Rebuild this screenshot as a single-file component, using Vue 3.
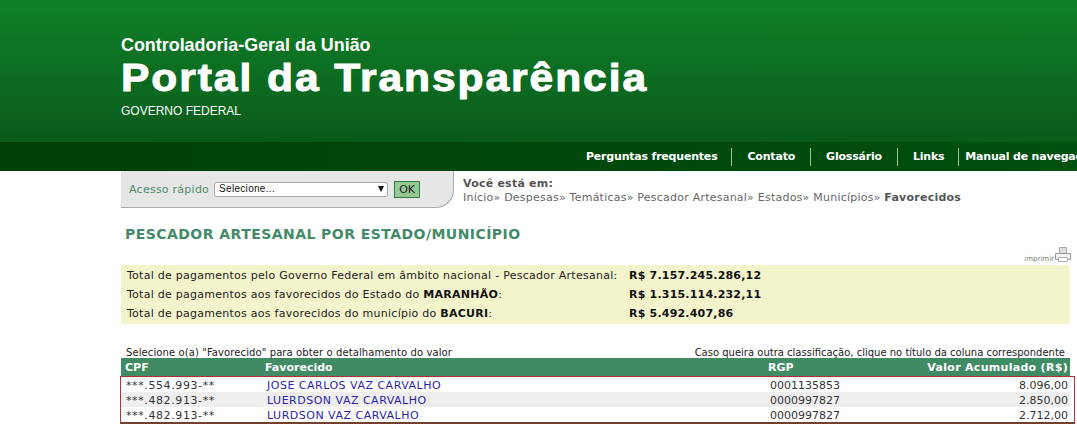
<template>
  <div class="page">
    <header class="top">
      <div class="org">Controladoria-Geral da União</div>
      <h1>Portal da Transparência</h1>
      <div class="gov">GOVERNO FEDERAL</div>
    </header>
    <nav class="nav">
      <a v-for="(item, idx) in menu" :key="item.label" :class="['nav-item', { first: idx === 0 }]" :style="{ paddingLeft: item.left + 'px', paddingRight: item.right + 'px' }">{{ item.label }}</a>
    </nav>
    <div class="content">
      <div class="bar">
        <div class="quick">
          <span class="quick-label">Acesso rápido</span>
          <div class="fake-select">Selecione...<span class="arrow"></span></div>
          <span class="ok">OK</span>
        </div>
        <div class="crumbs">
          <strong>Você está em:</strong>
          <div>Início» Despesas» Temáticas» Pescador Artesanal» Estados» Municípios» <b>Favorecidos</b></div>
        </div>
      </div>
      <h2>PESCADOR ARTESANAL POR ESTADO/MUNICÍPIO</h2>
      <div class="print">
        <span>imprimir</span>
        <svg width="16" height="17" viewBox="0 0 16 17">
          <path d="M4.500 1.500h7v6h-7z" fill="#dcdcdc" stroke="#a8a8a8" />
          <path d="M.5 7.500h15v6H.5z" fill="#f4f4f4" stroke="#9a9a9a" />
          <path d="M3.500 11.500h9v4h-9z" fill="#fff" stroke="#b0b0b0" />
        </svg>
      </div>
      <div class="totals">
        <div v-for="t in totals" :key="t.value" class="total-row">
          <span class="total-label">{{ t.text }}<b v-if="t.place">{{ t.place }}</b><template v-if="t.place">:</template></span>
          <b class="total-value">{{ t.value }}</b>
        </div>
      </div>
      <div class="hints">
        <span class="hint-left">Selecione o(a) "Favorecido" para obter o detalhamento do valor</span>
        <span>Caso queira outra classificação, clique no título da coluna correspondente</span>
      </div>
      <div class="thead row">
        <span class="c-cpf">CPF</span>
        <span class="c-name">Favorecido</span>
        <span class="c-rgp">RGP</span>
        <span class="c-val">Valor Acumulado (R$)</span>
      </div>
      <div class="tbody">
        <div v-for="r in rows" :key="r.name" class="row item">
          <span class="c-cpf">{{ r.cpf }}</span>
          <a class="c-name">{{ r.name }}</a>
          <span class="c-rgp">{{ r.rgp }}</span>
          <span class="c-val">{{ r.val }}</span>
        </div>
        <div class="mark"></div>
      </div>
    </div>
  </div>
</template>

<script setup>
const menu = [
  { label: 'Perguntas frequentes', left: 0, right: 14 },
  { label: 'Contato', left: 15, right: 15 },
  { label: 'Glossário', left: 15, right: 15 },
  { label: 'Links', left: 15, right: 14 },
  { label: 'Manual de navegação', left: 6, right: 0 }
]
const totals = [
  { text: 'Total de pagamentos pelo Governo Federal em âmbito nacional - Pescador Artesanal:', value: 'R$ 7.157.245.286,12' },
  { text: 'Total de pagamentos aos favorecidos do Estado do ', place: 'MARANHÃO', value: 'R$ 1.315.114.232,11' },
  { text: 'Total de pagamentos aos favorecidos do município do ', place: 'BACURI', value: 'R$ 5.492.407,86' }
]
const rows = [
  { cpf: '***.554.993-**', name: 'JOSE CARLOS VAZ CARVALHO', rgp: '0001135853', val: '8.096,00' },
  { cpf: '***.482.913-**', name: 'LUERDSON VAZ CARVALHO', rgp: '0000997827', val: '2.850,00' },
  { cpf: '***.482.913-**', name: 'LURDSON VAZ CARVALHO', rgp: '0000997827', val: '2.712,00' }
]
</script>

<style>
html, body { margin: 0; overflow: hidden; background: #fff; }
</style>

<style scoped>
.page {
  width: 1077px;
  height: 429px;
  overflow: hidden;
  font-family: "DejaVu Sans", Verdana, sans-serif;
  font-size: 11px;
  color: #333;
}
.top {
  height: 142px;
  box-sizing: border-box;
  padding: 36px 0 0 121px;
  background: linear-gradient(#0f8129, #0a5a1a);
  color: #fff;
  font-family: "Liberation Sans", Arial, sans-serif;
}
.org { font-size: 17.900px; font-weight: bold; line-height: 18px; }
h1 {
  margin: 3px 0 0;
  font-size: 39px;
  line-height: 42px;
  font-weight: bold;
  letter-spacing: 1.8px;
  white-space: nowrap;
  -webkit-text-stroke: 1px #fff;
  transform: scaleX(1.09);
  transform-origin: left center;
}
.gov { font-size: 12px; line-height: 14px; margin-top: 5px; }
.nav {
  height: 29px;
  display: flex;
  align-items: center;
  padding-left: 586px;
  background: linear-gradient(90deg, #003f08, #00500f);
  white-space: nowrap;
}
.nav-item {
  flex: none;
  height: 18px;
  line-height: 18px;
  color: #fff;
  font-weight: bold;
  font-size: 11px;
  letter-spacing: -.2px;
  border-left: 1px solid #9fbf9f;
}
.nav-item.first { border-left: none; }
.content { padding-left: 121px; width: 949px; }
.bar { display: flex; height: 37px; }
.quick {
  width: 333px;
  height: 37px;
  flex: none;
  box-sizing: border-box;
  display: flex;
  align-items: center;
  padding: 0 0 0 8px;
  background: #e6e6e6;
  border-bottom: 1px solid #aaa;
  border-right: 1px solid #aaa;
  border-bottom-right-radius: 18px;
}
.quick-label { color: #4c8a68; letter-spacing: .25px; }
.fake-select {
  position: relative;
  width: 174px;
  height: 15px;
  box-sizing: border-box;
  margin-left: 5px;
  padding-left: 4px;
  background: #fff;
  border: 1px solid #aaa;
  border-radius: 2px;
  font: 10px/12px "Liberation Sans", Arial, sans-serif;
  color: #111;
  letter-spacing: .3px;
}
.arrow {
  position: absolute;
  right: 3px;
  top: 3px;
  border: 3.500px solid transparent;
  border-top: 6px solid #111;
  border-bottom: none;
}
.ok {
  margin-left: 6px;
  width: 24px;
  height: 15px;
  line-height: 15px;
  text-align: center;
  background: #96c896;
  border: 1px solid #2f7d3f;
  color: #222;
}
.crumbs { margin: 6px 0 0 9px; line-height: 14px; color: #666; letter-spacing: .23px; white-space: nowrap; }
.crumbs strong, .crumbs b { color: #555; }
h2 {
  margin: 17px 0 0 4px;
  font-size: 14px;
  line-height: 18px;
  color: #438a68;
  font-weight: bold;
  letter-spacing: .45px;
}
.print {
  height: 20px;
  display: flex;
  justify-content: flex-end;
  align-items: flex-end;
  gap: 1px;
  font-size: 7px;
  color: #777;
  margin: 0 -1px 2px 0;
}
.totals { background: #f4f4cc; padding: 1px 0; }
.total-row { display: flex; height: 19px; line-height: 19px; padding-left: 6px; color: #222; letter-spacing: .26px; }
.total-label { width: 502px; flex: none; }
.total-row b { color: #111; }
.total-value { letter-spacing: .2px; }
.hints {
  display: flex;
  justify-content: space-between;
  margin-top: 23px;
  padding: 0 5px;
  font-size: 10px;
  line-height: 11px;
  color: #222;
}
.hint-left { letter-spacing: .1px; }
.row { display: flex; white-space: nowrap; }
.thead {
  height: 18px;
  line-height: 20px;
  background: #408b63;
  color: #fff;
  font-weight: bold;
}
.thead .c-cpf { width: 144px; }
.thead .c-val { letter-spacing: .3px; }
.tbody { position: relative; margin-top: 1px; }
.mark {
  position: absolute;
  left: -1px;
  top: -1px;
  right: -5px;
  bottom: -2px;
  border: 1px solid #b03434;
  border-bottom: 2px solid #74402e;
  pointer-events: none;
}
.item { height: 15px; line-height: 17px; color: #333; }
.item:nth-child(even) { background: #eeeeee; }
.item .c-cpf { letter-spacing: .6px; padding-left: 5px; }
.item .c-name { letter-spacing: .5px; }
.c-cpf { width: 146px; padding-left: 4px; box-sizing: border-box; flex: none; }
.c-name { width: 503px; box-sizing: border-box; flex: none; }
.c-rgp { width: 100px; flex: none; }
.c-val { flex: 1; text-align: right; padding-right: 2px; }
a.c-name { color: #2a1fb0; }
</style>
